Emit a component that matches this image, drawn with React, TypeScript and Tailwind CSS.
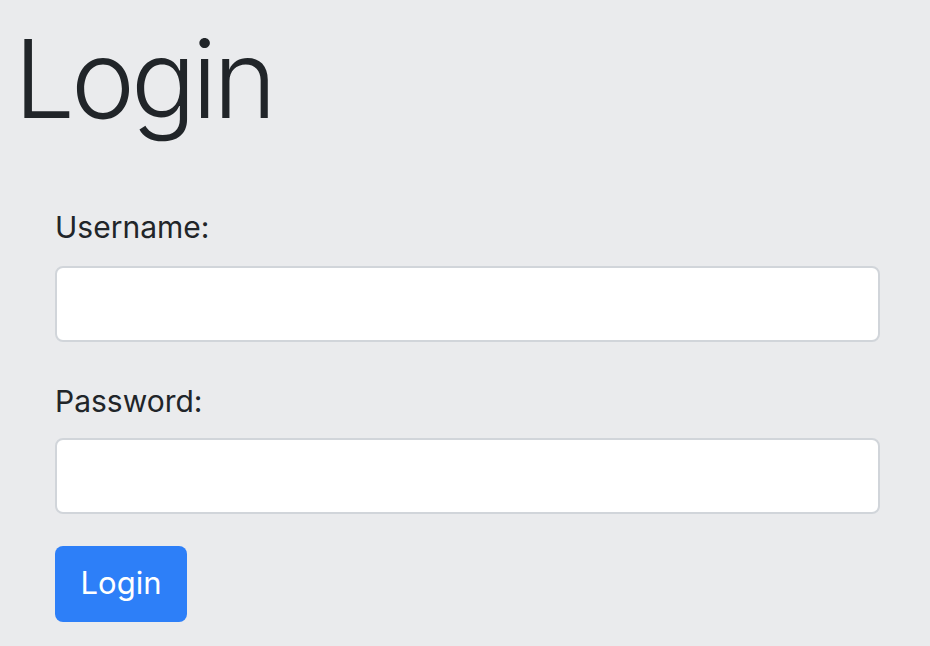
export default function App() {
  return (
    <div className="min-h-[646px] w-full bg-[#eaebed] text-[#212529] font-['Inter','Helvetica_Neue','Liberation_Sans',sans-serif]">
      <h1 className="pl-[14px] pt-[14px] text-[108px] font-light leading-[1.2] tracking-[-4px]">Login</h1>
      <form className="px-[55px] pt-[59px]" onSubmit={(e) => e.preventDefault()}>
        <div className="mb-[35px]">
          <label className="mb-[15px] block text-[30px] leading-[48px]">Username:</label>
          <input
            type="text"
            className="block h-[76px] w-[825px] rounded-[8px] border-2 border-[#d1d5da] bg-white px-6 text-[32px] outline-none"
          />
        </div>
        <div className="mb-[32px]">
          <label className="mb-[13px] block text-[30px] leading-[48px]">Password:</label>
          <input
            type="password"
            className="block h-[76px] w-[825px] rounded-[8px] border-2 border-[#d1d5da] bg-white px-6 text-[32px] outline-none"
          />
        </div>
        <button
          type="submit"
          className="h-[76px] w-[132px] rounded-[8px] bg-[#2d7ff8] text-[31px] text-white"
        >
          Login
        </button>
      </form>
    </div>
  )
}
